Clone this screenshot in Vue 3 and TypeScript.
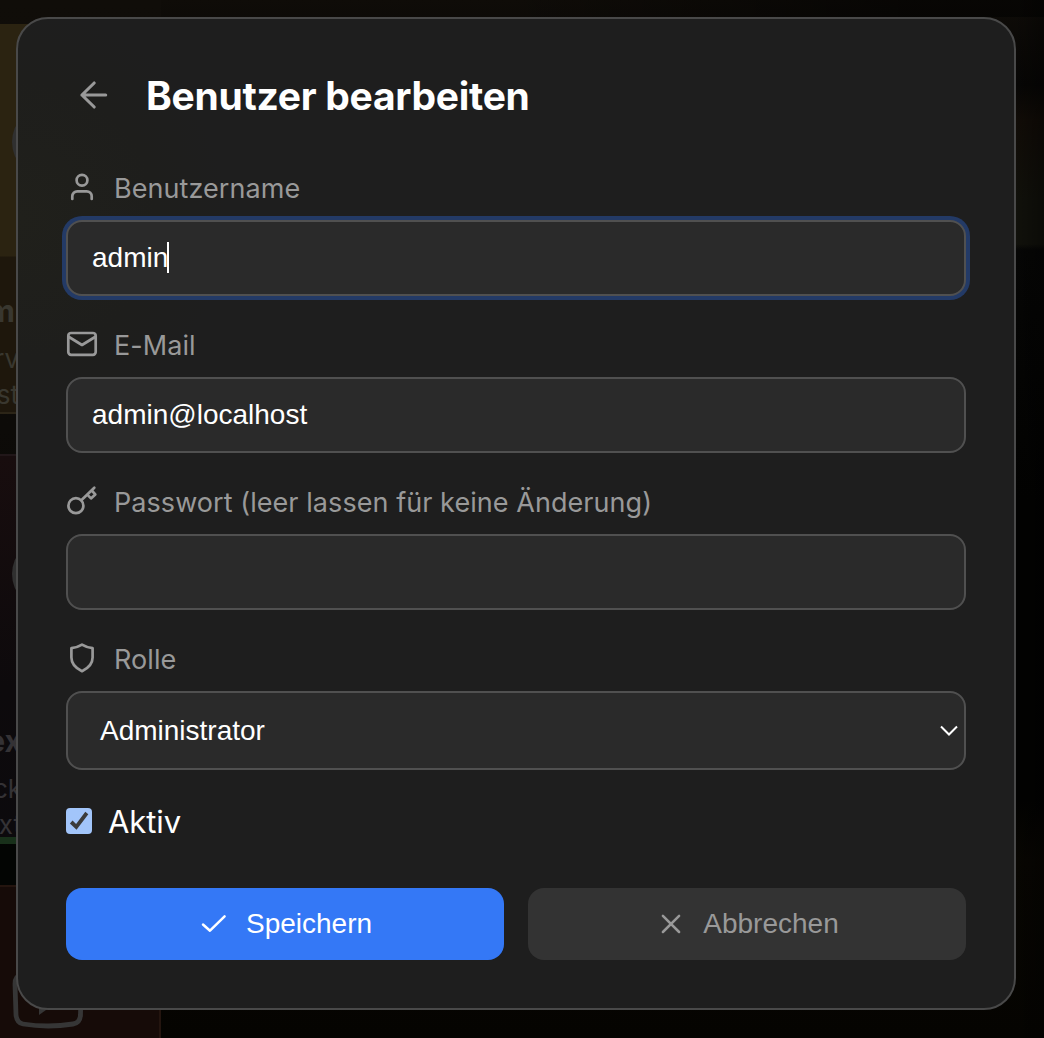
<script setup lang="ts">
import { ref } from 'vue'

const username = ref('admin')
const email = ref('admin@localhost')
const password = ref('')
</script>

<template>
  <div class="page">
    <div class="tiles" aria-hidden="true">
      <div class="tile gold">
        <div class="knob"></div>
        <div class="caption"><b>m</b><span>rv</span><span class="second">st</span></div>
      </div>
      <div class="tile wine">
        <div class="knob"></div>
        <div class="caption"><b>ex</b><span>ck</span><span class="second">xt</span></div>
      </div>
      <div class="tile rust">
        <svg class="video" width="72" height="60" viewBox="0 0 72 60">
          <path d="M9 5Q36 0 63 5Q69 6 69 14L68.5 45Q68 53 61 54Q36 58 11 54Q5 53 4 45L3 14Q3 6 9 5Z" fill="none" stroke="#363636" stroke-width="4.8" />
          <path d="M27 16L48 30L27 45Z" fill="#363636" />
        </svg>
      </div>
    </div>

    <form class="modal" @submit.prevent>
      <header>
        <button type="button" class="back" aria-label="Zurück">
          <svg width="56" height="56" viewBox="0 0 56 56"><path d="M39.7 28H15.9M28.2 16L15.9 28L28.2 40" /></svg>
        </button>
        <h1>Benutzer bearbeiten</h1>
      </header>

      <div class="group">
        <label for="username">
          <svg width="32" height="33" viewBox="0 0 32 33"><circle cx="16" cy="9.3" r="5.4" /><path d="M6.3 28V25.3a5 5 0 0 1 5-5h9.4a5 5 0 0 1 5 5v2.7" /></svg>
          <span>Benutzername</span>
        </label>
        <div class="control">
          <input id="username" v-model="username" class="focused" type="text" />
          <i class="caret"></i>
        </div>
      </div>

      <div class="group">
        <label for="email">
          <svg width="32" height="33" viewBox="0 0 32 33"><rect x="2.3" y="5" width="27.4" height="21.8" rx="2.8" /><path d="M3 9L16 17L29 9" /></svg>
          <span>E-Mail</span>
        </label>
        <input id="email" v-model="email" type="text" />
      </div>

      <div class="group">
        <label for="password">
          <svg width="32" height="33" viewBox="0 0 32 33"><circle cx="9.9" cy="20.7" r="7.5" /><path d="M15.3 15.3L28.3 2.8M21.8 10.1L25 13.4L29.3 9.4L26.2 6" /></svg>
          <span>Passwort (leer lassen für keine Änderung)</span>
        </label>
        <input id="password" v-model="password" type="password" />
      </div>

      <div class="group">
        <label for="role">
          <svg width="32" height="33" viewBox="0 0 32 33"><path d="M16 2.6Q20.5 5.4 26.6 6.2V15.5C26.6 22 22 26.3 16 29.2C10 26.3 5.4 22 5.4 15.5V6.2Q11.5 5.4 16 2.6Z" /></svg>
          <span>Rolle</span>
        </label>
        <div id="role" class="select" role="combobox" tabindex="0">
          <span>Administrator</span>
          <svg width="18" height="12" viewBox="0 0 18 12"><path d="M1 1.5L9 9.5L17 1.5" /></svg>
        </div>
      </div>

      <div class="active-row">
        <svg class="box" width="26" height="26" viewBox="0 0 26 26"><rect width="26" height="26" rx="4" fill="#a2c5fa" /><path d="M5.2 14L10.3 18.8L20.8 5" fill="none" stroke="#3b3b3b" stroke-width="3.8" /></svg>
        <span>Aktiv</span>
      </div>

      <div class="actions">
        <button type="submit" class="save">
          <svg width="32" height="32" viewBox="0 0 32 32"><path d="M5 16.5L12 22.7L26.6 8.4" /></svg>
          <span>Speichern</span>
        </button>
        <button type="button" class="cancel">
          <svg width="32" height="32" viewBox="0 0 32 32"><path d="M7.9 7.8L24.1 24M24.1 7.8L7.9 24" /></svg>
          <span>Abbrechen</span>
        </button>
      </div>
    </form>
  </div>
</template>

<style>
body { margin: 0; background: #030302; }
</style>

<style scoped>
* { box-sizing: border-box; }
.page {
  position: relative;
  width: 1044px;
  height: 1038px;
  padding: 17px 28px 28px 16px;
  overflow: hidden;
  background:
    linear-gradient(90deg, transparent 1014px, rgba(0, 0, 0, .35) 1044px),
    linear-gradient(90deg, transparent 500px, rgba(0, 0, 0, .5) 900px) 0 0 / 100% 17px no-repeat,
    linear-gradient(#0f0c08 0, #070605 85px, #110c07 120px, #11110b 200px, #11110b 244px, #060605 250px, #020201 500px, #020201 800px, #080602 860px, #050401 1038px);
  font-family: Inter, "Noto Sans", sans-serif;
}
.tiles { position: absolute; inset: 0 auto auto 0; width: 161px; height: 1038px; padding-top: 24px; background: linear-gradient(#100d09, #0d0b08 430px, #030503 850px); }
.tile { position: relative; height: 390px; margin-bottom: 40px; overflow: hidden; }
.gold { background: linear-gradient(#2b2311 0 232px, #1e170c 233px 100%); border-bottom: 2px solid #2c2517; }
.wine { background: linear-gradient(#180d0e, #0d0a0c 230px, #0c0a0d); border-top: 2px solid #211719; border-bottom: 7px solid #18301a; margin-bottom: 41px; }
.rust { background: #160b08; border: solid #24150f; border-width: 2px 2px 0 0; height: 160px; }
.knob { position: absolute; left: 12px; top: 82px; width: 72px; height: 72px; border-radius: 50%; background: #303030; }
.caption { position: absolute; top: 269px; left: -1px; width: 20px; display: flex; flex-direction: column; align-items: flex-end; color: #39372f; white-space: nowrap; }
.wine .caption { color: #343235; top: 267px; left: 2px; }
.caption b { font-size: 30px; line-height: 36px; }
.gold b { margin-right: 4px; }
.caption span { margin-top: 12px; font-size: 26px; line-height: 36px; }
.caption .second { margin-top: 0; }
.video { position: absolute; left: 12px; top: 83px; }

.modal { position: relative; width: 1000px; height: 993px; padding: 48px; border: 2px solid #494949; border-radius: 32px; background: radial-gradient(circle at 0 200px, #20201b, #1e1e1c 140px, #1e1e1e 210px); }
header { display: flex; align-items: center; height: 56px; margin-bottom: 48px; gap: 24px; }
h1 { margin: 0; padding-top: 2px; color: #fff; font-size: 39px; font-weight: 700; line-height: 48px; letter-spacing: -.28px; white-space: nowrap; }
button { border: 0; padding: 0; }
.back { width: 56px; height: 56px; background: none; }
svg { display: block; flex: none; }
.back svg, label svg { fill: none; stroke: #999; stroke-width: 2.7; stroke-linecap: round; stroke-linejoin: round; }
.back svg { stroke-width: 3.1; }
.group { margin-bottom: 32px; }
label { display: flex; align-items: center; gap: 16px; height: 33px; margin-bottom: 16px; color: #999; font-size: 27px; letter-spacing: .06px; white-space: nowrap; }
label span { padding-top: 2px; }
.control { position: relative; }
input, .select { display: block; width: 900px; height: 76px; border: 2px solid #505050; border-radius: 16px; background: #2a2a2a; color: #fff; padding: 0 24px; font: 28px "Liberation Sans", Arial, sans-serif; outline: none; }
.focused { box-shadow: 0 0 0 4px #233a66; }
.caret { position: absolute; left: 101px; top: 22px; width: 2px; height: 31px; background: #fff; }
.select { display: flex; align-items: center; justify-content: space-between; height: 79px; padding: 0 6px 0 32px; }
.select svg { fill: none; stroke: #fff; stroke-width: 2; }
.active-row { display: flex; align-items: center; gap: 16px; height: 38px; color: #fff; font-size: 31px; letter-spacing: -.1px; }
.actions { display: flex; gap: 24px; margin-top: 48px; }
.actions button { display: flex; flex: 1; align-items: center; justify-content: center; gap: 16px; height: 72px; border-radius: 16px; font: 28px "Liberation Sans", Arial, sans-serif; }
.save { background: #3478f6; color: #fff; }
.cancel { background: #333; color: #999; }
.actions svg { fill: none; stroke: currentColor; stroke-width: 2.5; stroke-linecap: round; stroke-linejoin: round; }
</style>
